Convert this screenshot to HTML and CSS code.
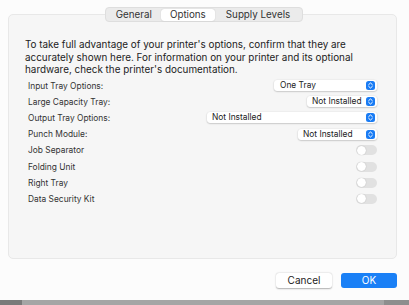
FILE: index.html
```html
<!DOCTYPE html>
<html>
<head>
<meta charset="utf-8">
<link rel="stylesheet" href="styles.css">
</head>
<body>
<div class="window">
  <div class="tabs">
    <span class="tab">General</span>
    <span class="tab active">Options</span>
    <span class="tab tab-last">Supply Levels</span>
  </div>
  <div class="panel">
    <p class="intro">To take full advantage of your printer's options, confirm that they are accurately shown here. For information on your printer and its optional hardware, check the printer's documentation.</p>
    <div class="rows">
      <div class="row"><span class="label">Input Tray Options:</span><span class="popup popup-one">One Tray<span class="stepper"><svg viewBox="0 0 10 10" width="10" height="10"><path d="M3 4 L5 2.2 L7 4 M3 6 L5 7.8 L7 6" fill="none" stroke="#fff" stroke-width="1.1" stroke-linecap="round" stroke-linejoin="round"/></svg></span></span></div>
      <div class="row"><span class="label">Large Capacity Tray:</span><span class="popup popup-large">Not Installed<span class="stepper"><svg viewBox="0 0 10 10" width="10" height="10"><path d="M3 4 L5 2.2 L7 4 M3 6 L5 7.8 L7 6" fill="none" stroke="#fff" stroke-width="1.1" stroke-linecap="round" stroke-linejoin="round"/></svg></span></span></div>
      <div class="row"><span class="label">Output Tray Options:</span><span class="popup popup-output">Not Installed<span class="stepper"><svg viewBox="0 0 10 10" width="10" height="10"><path d="M3 4 L5 2.2 L7 4 M3 6 L5 7.8 L7 6" fill="none" stroke="#fff" stroke-width="1.1" stroke-linecap="round" stroke-linejoin="round"/></svg></span></span></div>
      <div class="row"><span class="label">Punch Module:</span><span class="popup popup-punch">Not Installed<span class="stepper"><svg viewBox="0 0 10 10" width="10" height="10"><path d="M3 4 L5 2.2 L7 4 M3 6 L5 7.8 L7 6" fill="none" stroke="#fff" stroke-width="1.1" stroke-linecap="round" stroke-linejoin="round"/></svg></span></span></div>
      <div class="row"><span class="label">Job Separator</span><span class="toggle"><span class="knob"></span></span></div>
      <div class="row"><span class="label">Folding Unit</span><span class="toggle"><span class="knob"></span></span></div>
      <div class="row"><span class="label">Right Tray</span><span class="toggle"><span class="knob"></span></span></div>
      <div class="row"><span class="label">Data Security Kit</span><span class="toggle"><span class="knob"></span></span></div>
    </div>
  </div>
  <div class="buttons">
    <button class="btn">Cancel</button>
    <button class="btn primary">OK</button>
  </div>
</div>
<div class="desktop">
  <span class="desk-left"></span>
  <span class="desk-mid"></span>
  <span class="desk-right"></span>
</div>
</body>
</html>
```
FILE: styles.css
```css
html, body {
  margin: 0;
  padding: 0;
}
body {
  width: 409px;
  height: 305px;
  overflow: hidden;
  background: #fcfcfc;
  font-family: Inter, "Liberation Sans", sans-serif;
  color: #222;
}
.window {
  height: 300px;
  box-sizing: border-box;
  padding: 7px 12px 0 8px;
  background: #fcfcfc;
  display: flex;
  flex-direction: column;
}
.tabs {
  align-self: center;
  margin-left: 3px;
  display: flex;
  height: 15px;
  box-sizing: border-box;
  padding: 0 1px;
  background: #ebebeb;
  border: 1px solid #dedede;
  border-radius: 4px;
  position: relative;
  z-index: 1;
  align-items: center;
}
.tab {
  font-size: 9.8px;
  line-height: 12px;
  color: #333;
  padding: 0 9px;
  border-radius: 3px;
}
.tab-last {
  padding: 0 11px;
}
.tab.active {
  background: #fff;
  box-shadow: 0 0 1px rgba(0,0,0,0.25);
}
.panel {
  margin-top: -8px;
  height: 245px;
  box-sizing: border-box;
  background: #f6f6f6;
  border: 1px solid #e8e8e8;
  border-radius: 5px;
  padding: 23px 19px 0 16px;
}
.intro {
  margin: 0;
  font-size: 9.9px;
  line-height: 12.5px;
  color: #222;
}
.rows {
  margin-top: 2px;
  display: flex;
  flex-direction: column;
}
.row {
  height: 16.2px;
  display: flex;
  align-items: center;
  justify-content: space-between;
  padding-left: 3px;
}
.label {
  font-size: 8.4px;
  color: #333;
  white-space: nowrap;
}
.popup {
  flex-shrink: 0;
  white-space: nowrap;
  height: 11px;
  background: #fff;
  border-radius: 3px;
  box-shadow: 0 0.5px 1.5px rgba(0,0,0,0.3);
  font-size: 8.4px;
  line-height: 11px;
  color: #222;
  display: flex;
  align-items: center;
  justify-content: space-between;
  padding: 0 2px 0 5px;
  box-sizing: border-box;
}
.popup-one { width: 103px; padding-left: 6px; }
.popup-large { width: 70px; }
.popup-output { width: 170px; }
.popup-punch { width: 79px; }
.stepper {
  width: 9px;
  height: 9px;
  background: #1a7cf4;
  border-radius: 2.5px;
  display: flex;
  align-items: center;
  justify-content: center;
}
.stepper svg {
  width: 9px;
  height: 9px;
}
.toggle {
  width: 21px;
  height: 10px;
  border-radius: 5px;
  background: #e1e1e1;
  display: flex;
  align-items: center;
  padding: 0 1px;
  box-sizing: border-box;
}
.knob {
  width: 9px;
  height: 9px;
  border-radius: 50%;
  background: #fff;
  box-shadow: 0 0 1px rgba(0,0,0,0.3);
}
.buttons {
  display: flex;
  justify-content: flex-end;
  gap: 9px;
  margin-top: 14px;
}
.btn {
  width: 56px;
  height: 15px;
  border-radius: 3px;
  border: none;
  font-family: Inter, "Liberation Sans", sans-serif;
  font-size: 10px;
  line-height: 15px;
  padding: 0;
  background: #fff;
  color: #222;
  box-shadow: 0 0.5px 1.5px rgba(0,0,0,0.3);
}
.btn.primary {
  background: #1a80f6;
  color: #fff;
  box-shadow: none;
}
.desktop {
  height: 5px;
  display: flex;
}
.desk-left {
  width: 22px;
  background: #7a7a7a;
}
.desk-mid {
  flex: 1;
  background: #a5a5a5;
}
.desk-right {
  width: 25px;
  background: #8e8e8e;
}
```
